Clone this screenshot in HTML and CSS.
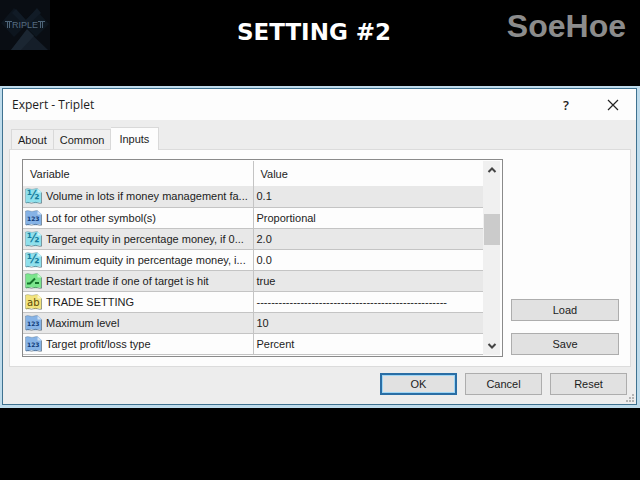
FILE: index.html
```
<!doctype html>
<html lang="en">

	<head>
		<meta charset="UTF-8" />
		<title>Setting #2</title>
		<link rel="stylesheet" href="styles.css">
	</head>

	<body>
		<!-- sheet shape shared by the icons of the variable list -->
		<svg class="sprite" aria-hidden="true">
			<symbol id="sheet" viewBox="0 0 17 16">
				<path d="M.5 1Q3 .2 5 1T9 1T13 .8L16.500 4V15.200Q14.500 13.800 12.500 14.800T8.500 14.800T4.500 14.800T.5 14.800z" fill="currentColor" />
				<path d="M1 15Q2.500 13.900 4.500 14.800T8.500 14.800T12.500 14.800T16.500 15.200V4.500" fill="none" stroke="#123" stroke-opacity=".4" />
				<path d="M.5 15V1Q3 .2 5 1T9 1T13 .8" fill="none" stroke="#123" stroke-opacity=".2" />
				<path d="M12.500 1v3.500h4z" fill="#fff" fill-opacity=".6" />
			</symbol>
		</svg>

		<header class="banner">
			<svg class="logo" viewBox="0 0 50 50" role="img" aria-label="Triplet">
				<rect width="50" height="50" fill="#090d13" />
				<path d="M14 8l14 15-14 14L1 23z" fill="#0d151e" />
				<path d="M36 10l13 14-13 13-14-14z" fill="#0d161f" />
				<path d="M11 50l16-20 21 20z" fill="#151e29" />
				<path d="M11 50l16-21 7 7-13 14z" fill="#1b2632" />
				<path d="M16 9l10 11L37 8l4 5-15 14-14-14z" fill="#111b26" />
				<path d="M5 21.500h7M7.500 22v6M9.500 22v6M38 21.500h7M40.500 22v6M42.500 22v6" stroke="#4d6478" />
				<text x="12" y="28" class="logo-text">RIPLE</text>
			</svg>
			<h1>SETTING #2</h1>
			<span class="brand">SoeHoe</span>
		</header>

		<main class="frame">
			<section class="dialog">
				<div class="titlebar">
					<h2>Expert - Triplet</h2>
					<button type="button" class="help" aria-label="Help">?</button>
					<button type="button" class="close" aria-label="Close">
						<svg width="12" height="12" viewBox="0 0 12 12"><path d="M1 1l10 10M11 1L1 11" stroke="#222" stroke-width="1.200" /></svg>
					</button>
				</div>

				<nav class="tabs">
					<button type="button">About</button>
					<button type="button">Common</button>
					<button type="button" class="active">Inputs</button>
				</nav>

				<div class="panel">
					<div class="list">
						<table>
							<colgroup>
								<col class="col-name">
								<col>
							</colgroup>
							<thead>
								<tr><th>Variable</th><th>Value</th></tr>
							</thead>
							<tbody>
								<tr>
									<td><svg class="icon cyan"><use href="#sheet" /><text x="2" y="11">½</text></svg>Volume in lots if money management fa...</td>
									<td>0.1</td>
								</tr>
								<tr>
									<td><svg class="icon blue"><use href="#sheet" /><text x="2" y="11">123</text></svg>Lot for other symbol(s)</td>
									<td>Proportional</td>
								</tr>
								<tr>
									<td><svg class="icon cyan"><use href="#sheet" /><text x="2" y="11">½</text></svg>Target equity in percentage money, if 0...</td>
									<td>2.0</td>
								</tr>
								<tr>
									<td><svg class="icon cyan"><use href="#sheet" /><text x="2" y="11">½</text></svg>Minimum equity in percentage money, i...</td>
									<td>0.0</td>
								</tr>
								<tr>
									<td><svg class="icon green"><use href="#sheet" /><path class="switch" d="M2 10.500h3l5-5M10 10h4" /></svg>Restart trade if one of target is hit</td>
									<td>true</td>
								</tr>
								<tr>
									<td><svg class="icon yellow"><use href="#sheet" /><text x="2" y="12">ab</text></svg>TRADE SETTING</td>
									<td>----------------------------------------------------</td>
								</tr>
								<tr>
									<td><svg class="icon blue"><use href="#sheet" /><text x="2" y="11">123</text></svg>Maximum level</td>
									<td>10</td>
								</tr>
								<tr>
									<td><svg class="icon blue"><use href="#sheet" /><text x="2" y="11">123</text></svg>Target profit/loss type</td>
									<td>Percent</td>
								</tr>
							</tbody>
						</table>
						<div class="scrollbar">
							<button type="button" aria-label="Scroll up"><svg width="10" height="8" viewBox="0 0 10 8"><path d="M1.500 6L5 2.500 8.500 6" /></svg></button>
							<div class="track"><div class="thumb"></div></div>
							<button type="button" aria-label="Scroll down"><svg width="10" height="8" viewBox="0 0 10 8"><path d="M1.500 2L5 5.500 8.500 2" /></svg></button>
						</div>
					</div>
					<div class="side">
						<button type="button" class="btn">Load</button>
						<button type="button" class="btn">Save</button>
					</div>
				</div>

				<footer class="actions">
					<button type="button" class="btn default">OK</button>
					<button type="button" class="btn">Cancel</button>
					<button type="button" class="btn">Reset</button>
					<svg class="grip" width="8" height="8" viewBox="0 0 8 8"><path d="M6 0h2v2H6zM3 3h2v2H3zM6 3h2v2H6zM0 6h2v2H0zM3 6h2v2H3zM6 6h2v2H6z" fill="#b4b4b4" /></svg>
				</footer>
			</section>
		</main>
	</body>

</html>
```
FILE: styles.css
```
* {
	margin: 0;
	padding: 0;
	box-sizing: border-box;
}

body {
	background: #000;
	color: #1c1c1c;
	font-family: "Liberation Sans", Arial, sans-serif;
	font-size: 11px;
}

button {
	font: inherit;
	color: inherit;
	background: none;
	border: none;
}

.sprite {
	display: none;
}

.banner {
	display: grid;
	grid-template-columns: 1fr auto 1fr;
	align-items: start;
	height: 86px;
}

.logo {
	width: 50px;
	height: 50px;
}

.logo-text {
	font-family: "Liberation Sans", Arial, sans-serif;
	font-size: 9px;
	fill: #566b7f;
}

h1 {
	padding: 16px 12px 0 0;
	color: #fff;
	font-family: "DejaVu Sans", sans-serif;
	font-size: 23px;
	font-weight: bold;
	line-height: 32px;
}

.brand {
	justify-self: end;
	padding: 8px 14px 0 0;
	color: #8c8c8c;
	font-size: 32px;
	font-weight: bold;
	line-height: 36px;
}

.frame {
	padding: 2px 3px 3px 2px;
	background: #bfdcec;
}

.dialog {
	position: relative;
	background: #ededed;
	border: 1px solid #3f7290;
}

.titlebar {
	display: flex;
	align-items: center;
	height: 31px;
	padding: 0 17px 0 9px;
	background: #fdfdfd;
}

h2 {
	flex: 1;
	font-family: "Open Sans", sans-serif;
	font-size: 12px;
	font-weight: normal;
}

.help {
	width: 12px;
	margin-right: 35px;
	font-family: "Open Sans", sans-serif;
	font-size: 13px;
	font-weight: 600;
}

.close {
	display: flex;
}

.tabs {
	display: flex;
	align-items: flex-end;
	height: 29px;
	padding-left: 8px;
}

.tabs button {
	height: 20px;
	padding: 0 6px;
	background: #f0f0f0;
	border: 1px solid #d9d9d9;
	border-bottom: none;
}

.tabs button + button {
	border-left: none;
}

.tabs .active {
	height: 23px;
	padding: 0 9px 0 8px;
	margin-bottom: -1px;
	background: #fdfdfd;
}

.panel {
	display: flex;
	gap: 8px;
	margin: 0 5px 0 6px;
	padding: 9px 11px 9px 12px;
	background: #fdfdfd;
	border: 1px solid #dcdcdc;
}

.list {
	flex: 1;
	display: flex;
	align-items: flex-start;
	border: 1px solid #8a8a8a;
	padding: 1px 2px 1px 0;
}

table {
	flex: 1;
	width: 100%;
	table-layout: fixed;
	border-collapse: collapse;
}

.col-name {
	width: 50%;
}

th {
	height: 25px;
	padding-left: 7px;
	font-weight: normal;
	text-align: left;
}

td {
	height: 21px;
	padding-left: 3px;
	border-bottom: 1px solid #c4c4c4;
	white-space: nowrap;
}

th:first-child,
td:first-child {
	border-right: 1px solid #c4c4c4;
}

td:first-child {
	padding-left: 2px;
}

tbody tr:nth-child(odd) {
	background: #e8e8e8;
}

.icon {
	width: 17px;
	height: 16px;
	margin-right: 4px;
	vertical-align: -4px;
}

.icon text {
	font-family: "DejaVu Sans", sans-serif;
	font-size: 6px;
	font-weight: bold;
	fill: #103a78;
}

.icon.cyan {
	color: #8fe0ec;
}

.icon.cyan text {
	font-size: 12px;
	fill: #177c9c;
}

.icon.blue {
	color: #86b3e6;
}

.icon.green {
	color: #7be58c;
}

.switch {
	fill: none;
	stroke: #14722a;
	stroke-width: 2;
}

.icon.yellow {
	color: #f2e37c;
}

.icon.yellow text {
	font-size: 10px;
	font-weight: normal;
	fill: #5c4c08;
}

.scrollbar {
	display: flex;
	flex-direction: column;
	flex: none;
	align-self: stretch;
	width: 17px;
	background: #f0f0f0;
}

.scrollbar button {
	height: 18px;
}

.scrollbar path {
	fill: none;
	stroke: #444;
	stroke-width: 2;
}

.track {
	flex: 1;
	padding-top: 35px;
}

.thumb {
	height: 31px;
	margin-left: 1px;
	background: #cbcbcb;
}

.side {
	display: flex;
	flex-direction: column;
	justify-content: flex-end;
	flex: none;
	gap: 12px;
	width: 108px;
	padding-bottom: 2px;
}

.btn {
	height: 22px;
	background: #e1e1e1;
	border: 1px solid #adadad;
}

.actions {
	display: flex;
	justify-content: flex-end;
	gap: 8px;
	padding: 6px 9px 9px;
}

.actions .btn {
	width: 77px;
}

.actions .default {
	border: 2px solid #2a6ea5;
	box-shadow: inset 0 0 0 1px #9fd6f5;
}

.grip {
	position: absolute;
	right: 2px;
	bottom: 2px;
}
```
